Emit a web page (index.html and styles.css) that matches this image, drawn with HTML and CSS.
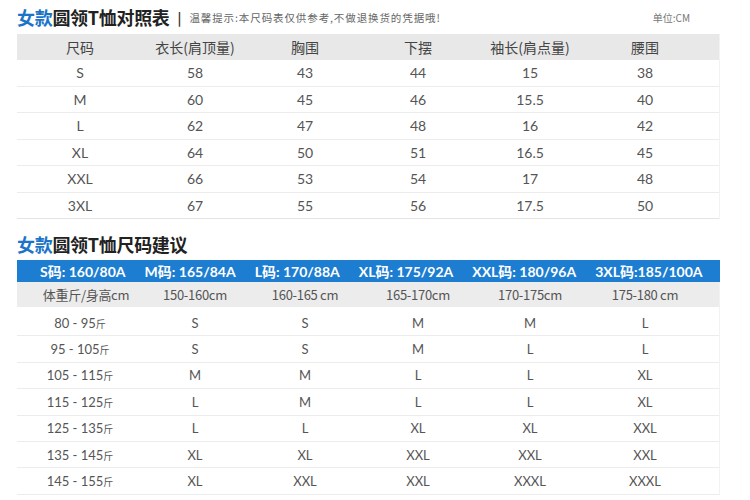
FILE: index.html
```html
<!DOCTYPE html>
<html lang="zh">
<head>
<meta charset="utf-8">
<title>女款圆领T恤尺码表</title>
<link rel="stylesheet" href="styles.css">
</head>
<body>
<div class="page">
  <div class="title-row">
    <h1 class="title"><span class="accent">女款</span>圆领T恤对照表</h1>
    <span class="sep">|</span>
    <span class="tip">温馨提示:本尺码表仅供参考,不做退换货的凭据哦!</span>
    <span class="unit">单位:CM</span>
  </div>

  <div class="table t1">
    <div class="row head">
      <div>尺码</div><div>衣长(肩顶量)</div><div>胸围</div><div>下摆</div><div>袖长(肩点量)</div><div>腰围</div>
    </div>
    <div class="row"><div>S</div><div>58</div><div>43</div><div>44</div><div>15</div><div>38</div></div>
    <div class="row"><div>M</div><div>60</div><div>45</div><div>46</div><div>15.5</div><div>40</div></div>
    <div class="row"><div>L</div><div>62</div><div>47</div><div>48</div><div>16</div><div>42</div></div>
    <div class="row"><div>XL</div><div>64</div><div>50</div><div>51</div><div>16.5</div><div>45</div></div>
    <div class="row"><div>XXL</div><div>66</div><div>53</div><div>54</div><div>17</div><div>48</div></div>
    <div class="row"><div>3XL</div><div>67</div><div>55</div><div>56</div><div>17.5</div><div>50</div></div>
  </div>

  <div class="title-row second">
    <h2 class="title"><span class="accent">女款</span>圆领T恤尺码建议</h2>
  </div>

  <div class="blue-bar">
    <span>S码: 160/80A</span>
    <span>M码: 165/84A</span>
    <span>L码: 170/88A</span>
    <span>XL码: 175/92A</span>
    <span>XXL码: 180/96A</span>
    <span>3XL码:185/100A</span>
  </div>

  <div class="table t2">
    <div class="row hrow">
      <div>体重斤/身高cm</div><div>150-160cm</div><div>160-165 cm</div><div>165-170cm</div><div>170-175cm</div><div>175-180 cm</div>
    </div>
    <div class="row"><div>80 - 95<small>斤</small></div><div>S</div><div>S</div><div>M</div><div>M</div><div>L</div></div>
    <div class="row"><div>95 - 105<small>斤</small></div><div>S</div><div>S</div><div>M</div><div>L</div><div>L</div></div>
    <div class="row"><div>105 - 115<small>斤</small></div><div>M</div><div>M</div><div>L</div><div>L</div><div>XL</div></div>
    <div class="row"><div>115 - 125<small>斤</small></div><div>L</div><div>M</div><div>L</div><div>L</div><div>XL</div></div>
    <div class="row"><div>125 - 135<small>斤</small></div><div>L</div><div>L</div><div>XL</div><div>XL</div><div>XXL</div></div>
    <div class="row"><div>135 - 145<small>斤</small></div><div>XL</div><div>XL</div><div>XXL</div><div>XXL</div><div>XXL</div></div>
    <div class="row"><div>145 - 155<small>斤</small></div><div>XL</div><div>XXL</div><div>XXL</div><div>XXXL</div><div>XXXL</div></div>
  </div>
</div>
</body>
</html>
```

FILE: styles.css
```css
* { box-sizing: border-box; }
html, body { margin: 0; padding: 0; background: #fff; }
body {
  font-family: Lato, "Noto Sans CJK SC", sans-serif;
  color: #555;
  width: 750px;
  height: 500px;
  overflow: hidden;
}
.page {
  padding-left: 17px;
  width: 737px;
}
.title-row {
  display: flex;
  align-items: center;
  height: 34px;
}
.title {
  margin: 0;
  font-family: "Noto Sans CJK SC", sans-serif;
  font-size: 18px;
  font-weight: 700;
  color: #222;
  letter-spacing: -0.3px;
  line-height: 1;
}
.accent { color: #1b74c8; }
.sep {
  font-family: "Noto Sans CJK SC", sans-serif;
  font-weight: 700;
  font-size: 13px;
  color: #333;
  margin: 0 8px 0 8px;
}
.tip {
  font-family: "Noto Sans CJK SC", sans-serif;
  font-size: 10.5px;
  color: #666;
  letter-spacing: 0.9px;
}
.unit {
  margin-left: auto;
  margin-right: 47px;
  font-family: "Noto Sans CJK SC", sans-serif;
  font-size: 10px;
  color: #777;
}
.table {
  width: 703px;
  border-right: 1px solid #f2f2f2;
}
.row {
  display: grid;
  grid-template-columns: 126px 104px 116px 110px 114px 116px 1fr;
  align-items: center;
  justify-items: center;
  height: 26.5px;
  border-bottom: 1px solid #ececec;
  font-size: 14px;
  color: #555;
}
.row.head {
  height: 26px;
  background: #e8e8e8;
  border-bottom: none;
  font-family: "Noto Sans CJK SC", sans-serif;
  font-size: 14px;
  color: #444;
}
.t1 .row:last-child { border-bottom: 1px solid #e4e4e4; }
.second {
  margin-top: 9px;
  height: 32px;
}
.blue-bar {
  display: flex;
  align-items: center;
  gap: 19px;
  width: 703px;
  height: 22px;
  padding-left: 23px;
  background: #1c7dd1;
  color: #fff;
  font-family: Lato, "Noto Sans CJK SC", sans-serif;
  font-weight: 700;
  font-size: 14px;
  white-space: nowrap;
}
.t2 .row { height: 26.4px; font-size: 13px; }
.t2 .row.hrow {
  height: 25px;
  background: #ececec;
  border-bottom: none;
  margin-bottom: 3px;
  font-family: "Noto Sans CJK SC", sans-serif;
  font-size: 13px;
  color: #555;
  letter-spacing: -0.3px;
}
.t2 .row.hrow > div:first-child { padding-left: 12px; }
small {
  font-family: "Noto Sans CJK SC", sans-serif;
  font-size: 10px;
}
```
